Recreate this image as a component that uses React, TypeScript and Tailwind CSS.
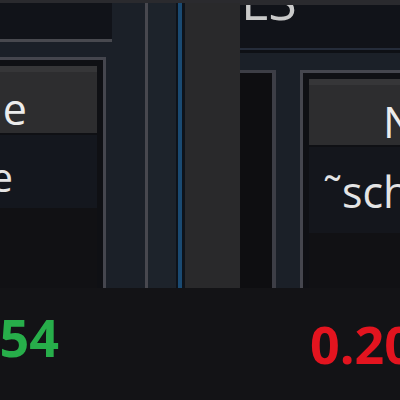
import React from 'react';

export default function App() {
  return (
    <div className="w-[400px] h-[400px] overflow-hidden bg-[#2a2a2e] flex flex-col font-['Open_Sans',sans-serif]">
      {/* Panels */}
      <div className="flex h-[288px] shrink-0 pt-[3px]">
        {/* Left column */}
        <div className="w-[145px] shrink-0 flex flex-col bg-[#1b2028]">
          <div className="w-[112px] h-[36px] bg-[#111319]" />
          <div className="w-[112px] h-[3px] bg-[#48494f]" />
          <div className="flex-1 flex flex-col pt-[15px] pr-[39px]">
            <div className="flex-1 flex flex-col border-t-[3px] border-r-[3px] border-[#45464e] bg-[#0f1014] pt-[6px] pr-[6px]">
              <div className="h-[67px] shrink-0 flex items-center justify-end border-t-[6px] border-[#363638] bg-[#2d2d2f] pt-[12px] pr-[64px]">
                <span className="text-[43px] leading-none tracking-[6px] text-[#ececec] whitespace-nowrap">Save</span>
              </div>
              <div className="h-[2px] shrink-0" />
              <div className="h-[73px] shrink-0 flex items-start justify-end bg-[#14171e] pt-[22px] pr-[84px]">
                <span className="text-[40px] leading-none text-[#e4e4e4] whitespace-nowrap">none</span>
              </div>
              <div className="flex-1 bg-[#111114]" />
            </div>
          </div>
        </div>

        {/* Splitters */}
        <div className="w-[3px] shrink-0 bg-[#48484f]" />
        <div className="w-[28px] shrink-0 bg-[#1d232b]" />
        <div className="w-[2px] shrink-0 bg-[#0d131b]" />
        <div className="w-[4px] shrink-0 bg-[#1a4a72]" />
        <div className="w-[3px] shrink-0 bg-[#0d131b]" />
        <div className="w-[55px] shrink-0 bg-[#29292b]" />

        {/* Right column */}
        <div className="flex-1 flex flex-col pt-[2px]">
          <div className="h-[43px] shrink-0 overflow-hidden bg-[#111319] pl-[1px]">
            <div className="-mt-[31px] text-[52px] leading-none text-[#c9c9c9] whitespace-nowrap">LS</div>
          </div>
          <div className="h-[2px] shrink-0 bg-[#252c3a]" />
          <div className="h-[3px] shrink-0 bg-[#0e1015]" />
          <div className="flex-1 flex bg-[#1b2028] pt-[17px]">
            <div className="w-[36px] shrink-0 border-t-[3px] border-r-[4px] border-[#3d3e46] bg-[#0e0e11]" />
            <div className="w-[24px] shrink-0" />
            <div className="flex-1 flex flex-col border-t-[3px] border-l-[3px] border-[#45464e] bg-[#0f1014] pt-[6px] pl-[6px]">
              <div className="h-[66px] shrink-0 flex items-center border-t-[6px] border-[#363638] bg-[#2d2d2f] pt-[12px] pl-[74px]">
                <span className="text-[43px] leading-none text-[#ececec] whitespace-nowrap">Name</span>
              </div>
              <div className="h-[2px] shrink-0" />
              <div className="h-[86px] shrink-0 bg-[#14161c] pt-[23px] pl-[14px]">
                <span className="text-[43px] leading-none text-[#e4e4e4] whitespace-nowrap">˜scheme</span>
              </div>
              <div className="flex-1 bg-[#111114]" />
            </div>
          </div>
        </div>
      </div>

      {/* Readouts */}
      <div className="flex-1 flex items-start bg-[#131316] font-bold text-[52px] leading-none">
        <div className="w-[59px] shrink-0 flex justify-end mt-[23px]">
          <span className="text-[#27ae4a] whitespace-nowrap">0.54</span>
        </div>
        <span className="ml-[251px] mt-[30px] shrink-0 text-[#e3141f] whitespace-nowrap">0.20</span>
      </div>
    </div>
  );
}
